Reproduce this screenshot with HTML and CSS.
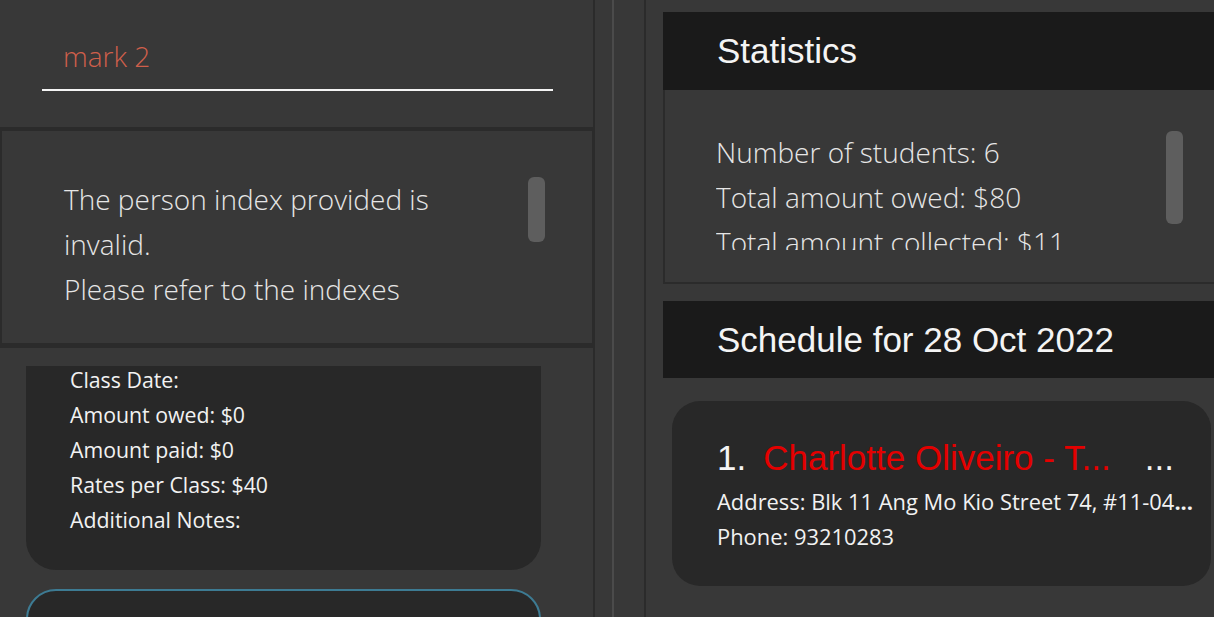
FILE: index.html
```html
<!DOCTYPE html>
<html lang="en">
<head>
<meta charset="utf-8">
<title>Address book</title>
<link rel="stylesheet" href="styles.css">
</head>
<body>
<div class="app">
  <section class="left">
    <div class="command">
      <div class="command-input">mark 2</div>
    </div>
    <div class="result">
      <div class="result-view">
        <p class="result-text">The person index provided is<br>invalid.<br>Please refer to the indexes</p>
      </div>
      <div class="scrollbar result-scroll"><div class="thumb result-thumb"></div></div>
    </div>
    <div class="list">
      <div class="list-view">
        <div class="person-card scrolled">
          <div class="field">Class Date:</div>
          <div class="field">Amount owed: $0</div>
          <div class="field">Amount paid: $0</div>
          <div class="field">Rates per Class: $40</div>
          <div class="field">Additional Notes:</div>
        </div>
        <div class="person-card selected"></div>
      </div>
    </div>
  </section>
  <div class="divider"><div class="divider-grip"></div></div>
  <section class="right">
    <div class="panel-header stats-header">Statistics</div>
    <div class="stats-body">
      <div class="stats-view">
        <div class="stat">Number of students: 6</div>
        <div class="stat">Total amount owed: $80</div>
        <div class="stat">Total amount collected: $11</div>
      </div>
      <div class="scrollbar stats-scroll"><div class="thumb stats-thumb"></div></div>
    </div>
    <div class="panel-header schedule-header">Schedule for 28 Oct 2022</div>
    <div class="schedule-card">
      <div class="title-row">
        <span class="index">1.</span>
        <span class="name">Charlotte Oliveiro - T...</span>
        <span class="more">...</span>
      </div>
      <div class="detail">Address: Blk 11 Ang Mo Kio Street 74, #11-04<b class="ellipsis">...</b></div>
      <div class="detail">Phone: 93210283</div>
    </div>
  </section>
</div>
</body>
</html>
```
FILE: styles.css
```css
html, body {
  margin: 0;
  padding: 0;
}
body {
  background: #383838;
  width: 1214px;
  height: 617px;
  overflow: hidden;
  font-family: "Open Sans", "Noto Sans", sans-serif;
  color: #f0f0f0;
}
.app {
  display: flex;
  height: 617px;
}
.left {
  width: 593px;
  flex: none;
  display: flex;
  flex-direction: column;
}
.command {
  height: 91px;
  border-bottom: 4px solid #2b2b2b;
  padding: 36px 40px 0 42px;
}
.command-input {
  font-weight: 300;
  font-size: 28px;
  line-height: 40px;
  color: #cf5f4b;
  padding: 0 0 13px 21px;
  border-bottom: 2px solid #f4f4f4;
}
.result {
  height: 212px;
  border-left: 2px solid #2b2b2b;
  border-right: 1px solid #2b2b2b;
  display: flex;
  align-items: flex-start;
  padding-top: 46px;
  box-sizing: border-box;
}
.result-view {
  flex: 1;
  height: 136px;
  overflow: hidden;
  padding-left: 62px;
}
.result-text {
  margin: 0;
  font-weight: 300;
  font-size: 28px;
  line-height: 45px;
  color: #e6e6e6;
}
.scrollbar {
  width: 17px;
  flex: none;
}
.thumb {
  background: #5e5e5e;
  border-radius: 6px;
}
.result-scroll {
  margin-right: 47px;
}
.result-thumb {
  height: 65px;
}
.list {
  flex: 1;
  border-top: 5px solid #2b2b2b;
  padding-top: 18px;
  min-height: 0;
}
.list-view {
  height: 100%;
  overflow: hidden;
  padding: 0 52px 0 26px;
}
.person-card {
  background: #282828;
  border-radius: 30px;
  padding: 0 20px 33px 44px;
}
.person-card.scrolled {
  margin-top: -4px;
  border-radius: 0 0 30px 30px;
}
.person-card.selected {
  margin-top: 19px;
  height: 120px;
  border: 2px solid #3d7b93;
  box-sizing: border-box;
  padding: 0;
}
.field {
  font-size: 21.3px;
  line-height: 35px;
  color: #f2f2f2;
}
.divider {
  width: 2px;
  flex: none;
  border-left: 2px solid #2b2b2b;
  border-right: 2px solid #2b2b2b;
  padding-left: 17px;
  padding-right: 30px;
  display: flex;
}
.divider-grip {
  width: 2px;
  background: #4b4b4b;
}
.right {
  flex: 1;
  min-width: 0;
  padding: 12px 0 0 17px;
  display: flex;
  flex-direction: column;
}
.panel-header {
  background: #1a1a1a;
  font-family: "Liberation Sans", Arial, sans-serif;
  font-size: 35px;
  color: #f4f4f4;
  padding-left: 54px;
  display: flex;
  align-items: center;
}
.stats-header {
  height: 78px;
}
.stats-body {
  height: 194px;
  box-sizing: border-box;
  border-left: 2px solid #2b2b2b;
  border-bottom: 2px solid #2b2b2b;
  padding: 40px 0 0 51px;
  display: flex;
  align-items: flex-start;
}
.stats-view {
  flex: 1;
  height: 120px;
  overflow: hidden;
}
.stat {
  font-weight: 300;
  font-size: 28px;
  line-height: 45px;
  color: #e6e6e6;
  white-space: nowrap;
}
.stats-scroll {
  margin: 1px 31px 0 0;
}
.stats-thumb {
  height: 93px;
}
.schedule-header {
  margin-top: 17px;
  height: 77px;
}
.schedule-card {
  margin: 23px 3px 0 9px;
  background: #282828;
  border-radius: 28px;
  height: 185px;
  box-sizing: border-box;
  padding: 37px 0 0 45px;
}
.title-row {
  display: flex;
  font-family: "Liberation Sans", Arial, sans-serif;
  font-size: 35px;
  line-height: 40px;
  margin-bottom: 6px;
  white-space: nowrap;
}
.index {
  color: #f4f4f4;
  margin-right: 17px;
}
.name {
  color: #e40000;
}
.more {
  color: #f4f4f4;
  margin-left: 34px;
}
.detail {
  font-size: 21.9px;
  line-height: 35px;
  color: #f2f2f2;
  white-space: nowrap;
}
.ellipsis {
  font-weight: 700;
}
```
